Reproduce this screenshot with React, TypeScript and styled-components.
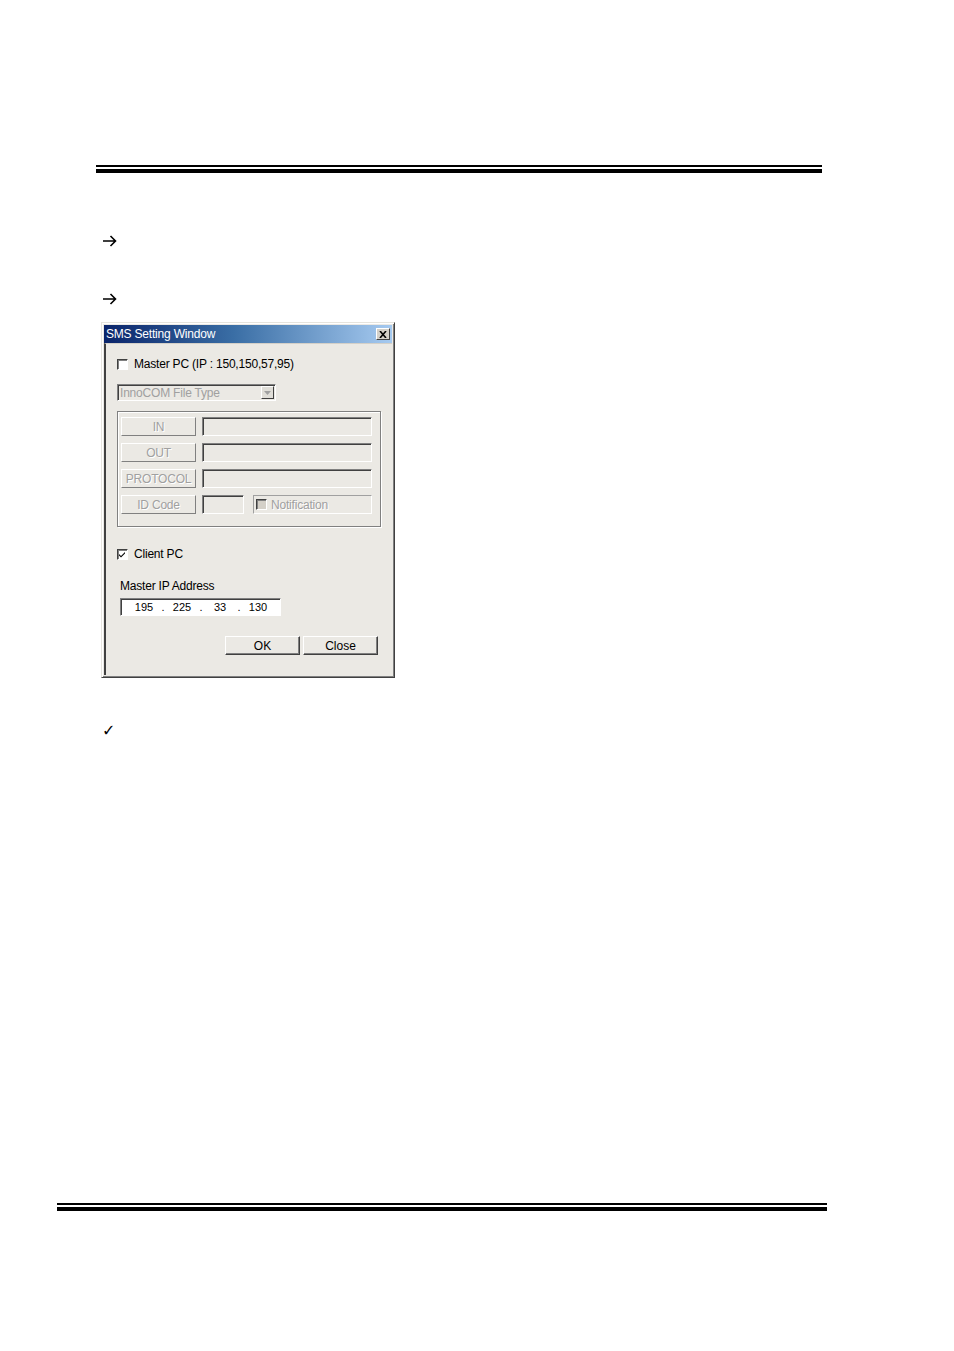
import * as React from "react"
import styled, { createGlobalStyle } from "styled-components"

const GlobalStyle = createGlobalStyle`
  html, body {
    margin: 0;
    padding: 0;
    background: #ffffff;
  }
  body {
    width: 954px;
    height: 1351px;
    overflow: hidden;
    font-family: "Liberation Sans", Arial, sans-serif;
  }
`

const Page = styled.div`
  position: relative;
  width: 954px;
  height: 1351px;
  display: flex;
  flex-direction: column;
`

const Rule = styled.div<{ $left: number; $width: number; $top: number }>`
  margin-left: ${p => p.$left}px;
  margin-top: ${p => p.$top}px;
  width: ${p => p.$width}px;
  display: flex;
  flex-direction: column;
  gap: 2px;
  &::before {
    content: "";
    height: 2px;
    background: #000;
  }
  &::after {
    content: "";
    height: 4px;
    background: #000;
  }
`

const Bullet = styled.div<{ $top: number }>`
  margin-left: 102px;
  margin-top: ${p => p.$top}px;
  height: 18px;
  display: flex;
  align-items: center;
  font-family: "DejaVu Sans", sans-serif;
  font-size: 16px;
  font-weight: bold;
  line-height: 18px;
  color: #000;
`

const Window = styled.div`
  margin-left: 101px;
  margin-top: 14px;
  width: 294px;
  height: 356px;
  box-sizing: border-box;
  background: #ebe9e4;
  border: 1px solid;
  border-color: #e6e4de #404040 #404040 #e6e4de;
  box-shadow: inset 1px 1px 0 #ffffff, inset -1px -1px 0 #808080;
  padding: 2px;
  display: flex;
  flex-direction: column;
  font-size: 12px;
  letter-spacing: -0.2px;
  color: #000;
`

const TitleBar = styled.div`
  height: 18px;
  display: flex;
  align-items: center;
  justify-content: space-between;
  padding: 0 2px 0 2px;
  background: linear-gradient(to right, #0a246a 0%, #3a6ea5 45%, #a6caf0 100%);
  color: #fff;
  font-size: 12px;
`

const CloseBox = styled.div`
  width: 14px;
  height: 12px;
  box-sizing: border-box;
  background: #d4d0c8;
  border: 1px solid;
  border-color: #fff #404040 #404040 #fff;
  display: flex;
  align-items: center;
  justify-content: center;
`

const Client = styled.div`
  flex: 1;
  border-left: 2px solid #404040;
  border-top: 1px solid #d4d0c8;
  display: flex;
  flex-direction: column;
  padding: 13px 0 0 11px;
`

const CheckRow = styled.div<{ $gapTop?: number }>`
  margin-top: ${p => p.$gapTop ?? 0}px;
  display: flex;
  align-items: center;
  gap: 6px;
  height: 14px;
`

const Box = styled.div<{ $disabled?: boolean }>`
  width: 11px;
  height: 11px;
  box-sizing: border-box;
  background: ${p => (p.$disabled ? "#d4d0c8" : "#fff")};
  border: 1px solid;
  border-color: #404040 #fff #fff #404040;
  box-shadow: inset 1px 1px 0 #808080;
  display: flex;
  align-items: center;
  justify-content: center;
`

const Combo = styled.div`
  margin-top: 13px;
  width: 159px;
  height: 17px;
  box-sizing: border-box;
  border: 1px solid;
  border-color: #808080 #fff #fff #808080;
  box-shadow: inset 1px 1px 0 #404040;
  display: flex;
  align-items: center;
  justify-content: space-between;
  padding: 0 1px 0 2px;
  color: #a0a0a0;
`

const ComboButton = styled.div`
  width: 13px;
  height: 13px;
  box-sizing: border-box;
  background: #e0ded8;
  border: 1px solid;
  border-color: #fff #404040 #404040 #fff;
  display: flex;
  align-items: center;
  justify-content: center;
`

const Group = styled.div`
  margin-top: 10px;
  width: 264px;
  height: 116px;
  box-sizing: border-box;
  border: 1px solid #808080;
  box-shadow: 1px 1px 0 #fff, inset 1px 1px 0 #fff;
  padding: 5px 0 0 3px;
  display: flex;
  flex-direction: column;
  gap: 7px;
`

const FieldRow = styled.div`
  display: flex;
  gap: 6px;
  height: 19px;
`

const GrayButton = styled.div`
  width: 75px;
  height: 19px;
  box-sizing: border-box;
  border: 1px solid;
  border-color: #fff #808080 #808080 #fff;
  display: flex;
  align-items: center;
  justify-content: center;
  color: #a0a0a0;
  text-shadow: 1px 1px 0 #fff;
`

const Sunken = styled.div<{ $width: number }>`
  width: ${p => p.$width}px;
  height: 19px;
  box-sizing: border-box;
  border: 1px solid;
  border-color: #808080 #fff #fff #808080;
  box-shadow: inset 1px 1px 0 #404040;
`

const NotifyBox = styled.div`
  margin-left: 3px;
  width: 119px;
  height: 19px;
  box-sizing: border-box;
  border: 1px solid;
  border-color: #a0a0a0 #fff #fff #a0a0a0;
  display: flex;
  align-items: center;
  padding-left: 2px;
  gap: 4px;
  color: #a0a0a0;
  text-shadow: 1px 1px 0 #fff;
`

const Label = styled.div`
  margin-top: 18px;
  margin-left: 3px;
  height: 14px;
  line-height: 14px;
`

const IpField = styled.div`
  margin-top: 5px;
  margin-left: 3px;
  width: 161px;
  height: 18px;
  box-sizing: border-box;
  background: #fff;
  border: 1px solid;
  border-color: #808080 #fff #fff #808080;
  box-shadow: inset 1px 1px 0 #404040;
  display: grid;
  grid-template-columns: 6px 34px 4px 34px 4px 34px 4px 34px;
  align-items: center;
  font-size: 11px;
  letter-spacing: 0;
`

const Octet = styled.span`
  text-align: center;
`

const Dot = styled.span`
  text-align: center;
`

const ButtonRow = styled.div`
  margin-top: 20px;
  margin-left: 108px;
  display: flex;
  gap: 3px;
`

const PushButton = styled.div`
  width: 75px;
  height: 19px;
  box-sizing: border-box;
  border: 1px solid;
  border-color: #fff #404040 #404040 #fff;
  box-shadow: inset -1px -1px 0 #808080;
  display: flex;
  align-items: center;
  justify-content: center;
  letter-spacing: 0;
`

const Arrow = () => (
  <svg width="15" height="14" viewBox="0 0 15 14">
    <path d="M1 7 H13.5 M8.5 2 L13.5 7 L8.5 12" stroke="#000" strokeWidth="1.6" fill="none" />
  </svg>
)

const Check = () => (
  <svg width="9" height="9" viewBox="0 0 9 9">
    <path d="M1 4 L3 6 L7 2 L7 3.5 L3 7.5 L1 5.5 Z" fill="#000" />
  </svg>
)

export default function App() {
  const ip = ["195", "225", "33", "130"]
  return (
    <Page>
      <GlobalStyle />
      <Rule $left={96} $width={726} $top={165} />
      <Bullet $top={59}>
        <Arrow />
      </Bullet>
      <Bullet $top={40}>
        <Arrow />
      </Bullet>
      <Window>
        <TitleBar>
          <span>SMS Setting Window</span>
          <CloseBox>
            <svg width="8" height="7" viewBox="0 0 8 7">
              <path d="M1 0 L7 7 M7 0 L1 7" stroke="#000" strokeWidth="1.6" fill="none" />
            </svg>
          </CloseBox>
        </TitleBar>
        <Client>
          <CheckRow>
            <Box />
            <span>Master PC (IP : 150,150,57,95)</span>
          </CheckRow>
          <Combo>
            <span>InnoCOM File Type</span>
            <ComboButton>
              <svg width="7" height="4" viewBox="0 0 7 4">
                <path d="M0 0 L7 0 L3.5 4 Z" fill="#a0a0a0" />
              </svg>
            </ComboButton>
          </Combo>
          <Group>
            <FieldRow>
              <GrayButton>IN</GrayButton>
              <Sunken $width={170} />
            </FieldRow>
            <FieldRow>
              <GrayButton>OUT</GrayButton>
              <Sunken $width={170} />
            </FieldRow>
            <FieldRow>
              <GrayButton>PROTOCOL</GrayButton>
              <Sunken $width={170} />
            </FieldRow>
            <FieldRow>
              <GrayButton>ID Code</GrayButton>
              <Sunken $width={42} />
              <NotifyBox>
                <Box $disabled />
                <span>Notification</span>
              </NotifyBox>
            </FieldRow>
          </Group>
          <CheckRow $gapTop={20}>
            <Box>
              <Check />
            </Box>
            <span>Client PC</span>
          </CheckRow>
          <Label>Master IP Address</Label>
          <IpField>
            <span />
            {ip.map((o, i) => (
              <React.Fragment key={i}>
                {i > 0 && <Dot>.</Dot>}
                <Octet>{o}</Octet>
              </React.Fragment>
            ))}
          </IpField>
          <ButtonRow>
            <PushButton>OK</PushButton>
            <PushButton>Close</PushButton>
          </ButtonRow>
        </Client>
      </Window>
      <Bullet $top={44}>✓</Bullet>
      <Rule $left={57} $width={770} $top={463} />
    </Page>
  )
}
